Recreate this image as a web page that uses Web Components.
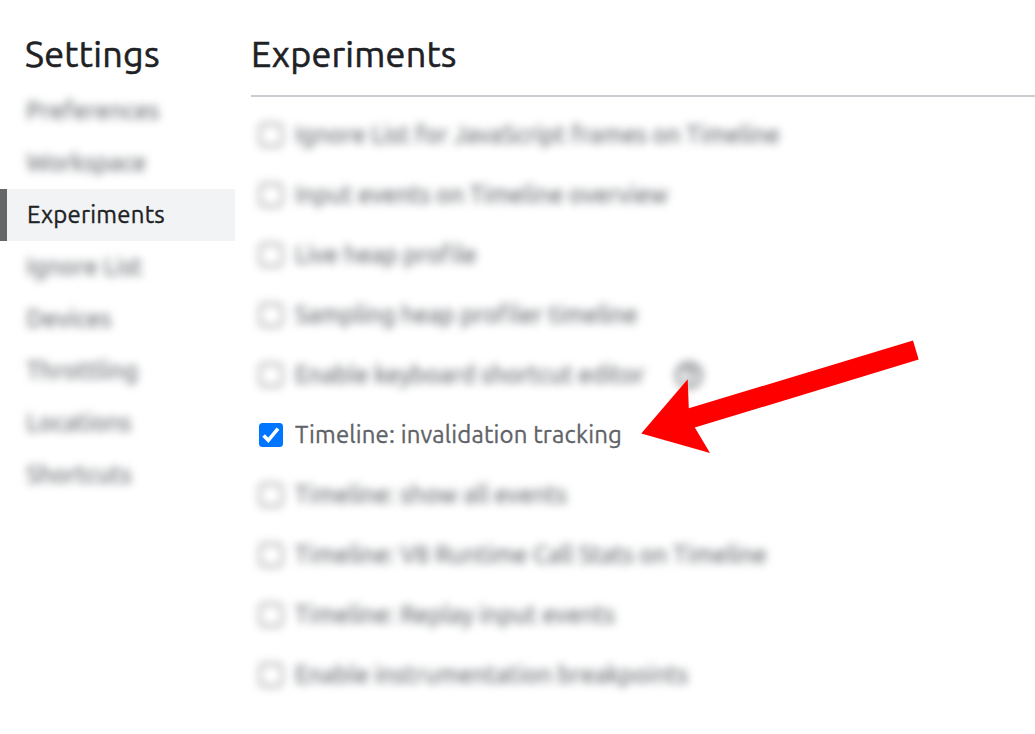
<!DOCTYPE html>
<html lang="en">
<head>
<meta charset="utf-8">
<title>Settings</title>
<style>
body{margin:0;background:#fff;font-family:Ubuntu,"Noto Sans",sans-serif;color:#202124;overflow:hidden}
</style>
</head>
<body>
<settings-page>
  <settings-nav slot="nav">
    <nav-item width="133">Preferences</nav-item>
    <nav-item width="120">Workspace</nav-item>
    <nav-item width="138" selected>Experiments</nav-item>
    <nav-item width="116">Ignore List</nav-item>
    <nav-item width="85">Devices</nav-item>
    <nav-item width="112">Throttling</nav-item>
    <nav-item width="105">Locations</nav-item>
    <nav-item width="105">Shortcuts</nav-item>
  </settings-nav>
  <experiment-item width="485">Ignore List for JavaScript frames on Timeline</experiment-item>
  <experiment-item width="373">Input events on Timeline overview</experiment-item>
  <experiment-item width="182">Live heap profile</experiment-item>
  <experiment-item width="343">Sampling heap profiler timeline</experiment-item>
  <experiment-item width="350" help>Enable keyboard shortcut editor</experiment-item>
  <experiment-item width="327" checked>Timeline: invalidation tracking</experiment-item>
  <experiment-item width="272">Timeline: show all events</experiment-item>
  <experiment-item width="472">Timeline: V8 Runtime Call Stats on Timeline</experiment-item>
  <experiment-item width="320">Timeline: Replay input events</experiment-item>
  <experiment-item width="393">Enable instrumentation breakpoints</experiment-item>
  <red-arrow slot="overlay"></red-arrow>
</settings-page>
<script>
// Label whose letter spacing is adjusted so the text spans a given width.
class FitText extends HTMLElement{
  connectedCallback(){
    const r=this.attachShadow({mode:'open'});
    r.innerHTML='<style>:host{display:inline-block;white-space:nowrap}span{display:inline-block;-webkit-text-stroke:var(--stroke,.35px) currentColor;font-kerning:normal;font-variant-ligatures:none}</style><span></span>';
    const s=r.querySelector('span');
    s.textContent=this.getAttribute('text');
    const w=s.getBoundingClientRect().width;
    s.style.letterSpacing=((+this.getAttribute('width')-w)/s.textContent.length)+'px';
  }
}
class SettingsPage extends HTMLElement{
  connectedCallback(){
    this.attachShadow({mode:'open'}).innerHTML=`<style>
:host{display:grid;grid-template-columns:235px 1fr;column-gap:16px;height:734px;position:relative;overflow:hidden;background:#fff}
h1{margin:0;font-weight:400;font-size:36px;line-height:48px;height:48px;padding-top:30px;--stroke:.55px}
aside h1{padding-left:25px}
header{height:95px;border-bottom:2px solid #cacdd1;box-sizing:content-box}
.list{padding-top:8px}
</style>
<aside><h1><fit-text text="Settings" width="135"></fit-text></h1><slot name="nav"></slot></aside>
<main><header><h1><fit-text text="Experiments" width="205.6"></fit-text></h1></header><div class="list"><slot></slot></div></main>
<slot name="overlay"></slot>`;
  }
}
class SettingsNav extends HTMLElement{
  connectedCallback(){
    this.attachShadow({mode:'open'}).innerHTML='<style>:host{display:block;padding-top:7px}</style><slot></slot>';
  }
}
class NavItem extends HTMLElement{
  connectedCallback(){
    this.attachShadow({mode:'open'}).innerHTML=`<style>
:host{display:flex;align-items:center;box-sizing:border-box;height:52px;padding:0 0 0 26.5px;font-size:24px;line-height:32px}
:host([selected]){background:#f1f3f4;border-left:7px solid #666;padding-left:20px}
:host(:not([selected])){color:#5f6368}
:host(:not([selected])) fit-text{filter:blur(4px)}
</style><fit-text text="${this.textContent}" width="${this.getAttribute('width')}"></fit-text>`;
  }
}
class ExperimentItem extends HTMLElement{
  connectedCallback(){
    const on=this.hasAttribute('checked');
    this.attachShadow({mode:'open'}).innerHTML=`<style>
:host{display:flex;align-items:center;height:60px;padding-left:8px;font-size:24px;line-height:32px;color:#5f6368}
:host(:not([checked])){filter:blur(4px)}
svg{flex:none}
fit-text{margin-left:12px}
.help{margin-left:30px}
</style>
<svg width="24" height="24" viewBox="0 0 24 24">${on
 ?'<rect width="24" height="24" rx="3.5" fill="#0075ff"/><path d="M4.6 12.6 9.3 17.3 19 5.6" fill="none" stroke="#fff" stroke-width="3.6"/>'
 :'<rect x="1" y="1" width="22" height="22" rx="3.5" fill="#fff" stroke="#858585" stroke-width="1.8"/>'}</svg>
<fit-text text="${this.textContent}" width="${this.getAttribute('width')}"></fit-text>
${this.hasAttribute('help')?'<svg class="help" width="28" height="28" viewBox="0 0 28 28" fill="none" stroke="#5f6368" stroke-width="2.7"><circle cx="14" cy="14" r="12"/><path d="M9.5 11.5a4.5 4.5 0 1 1 7.5 3.3c-1.8 1.5-3 2-3 4M14 20.5v2.5"/></svg>':''}`;
  }
}
class RedArrow extends HTMLElement{
  connectedCallback(){
    this.attachShadow({mode:'open'}).innerHTML=`<style>:host{display:block;position:absolute;left:640px;top:338px;width:280px;height:118px}svg{display:block}</style>
<svg width="280" height="118" viewBox="640 338 280 118"><path fill="#f00" d="M641.2 433.4 687.7 379.2 688.8 408.3 913 340.4 918.7 359.6 694.8 427.6 710 453Z"/></svg>`;
  }
}
customElements.define('fit-text',FitText);
customElements.define('settings-page',SettingsPage);
customElements.define('settings-nav',SettingsNav);
customElements.define('nav-item',NavItem);
customElements.define('experiment-item',ExperimentItem);
customElements.define('red-arrow',RedArrow);
</script>
</body>
</html>
